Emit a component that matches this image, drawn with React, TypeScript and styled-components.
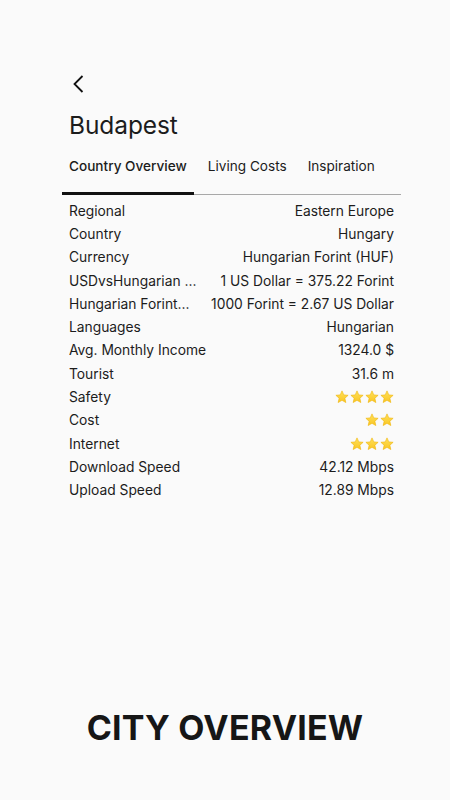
import React from "react"
import styled, { createGlobalStyle } from "styled-components"

const GlobalStyle = createGlobalStyle`
    html, body {
        margin: 0;
        padding: 0;
        background: #fafafa;
    }
    body {
        font-family: Inter, "Noto Sans", sans-serif;
        color: #1c1c1c;
    }
`

const Page = styled.div`
    width: 450px;
    height: 800px;
    display: flex;
    flex-direction: column;
    background: #fafafa;
    box-sizing: border-box;
    padding: 75px 49px 0 62px;
`

const BackButton = styled.button`
    display: flex;
    align-items: center;
    width: 24px;
    height: 18px;
    padding: 0 0 0 11px;
    border: none;
    background: transparent;
    cursor: pointer;
`

const Title = styled.h1`
    margin: 17px 0 0 7px;
    font-size: 24.5px;
    line-height: 30px;
    font-weight: 400;
    letter-spacing: -0.1px;
`

const TabBar = styled.div`
    display: flex;
    gap: 7px;
    margin-top: 5px;
    border-bottom: 1px solid #a8a8a8;
`

const Tab = styled.div<{ $active?: boolean }>`
    padding: 12px 7px 20px;
    font-size: 13.6px;
    line-height: 18px;
    color: #1c1c1c;
    font-weight: ${(p) => (p.$active ? 500 : 400)};
    box-shadow: ${(p) => (p.$active ? "inset 0 -3px 0 #111" : "none")};
    margin-bottom: -1px;
`

const List = styled.div`
    display: flex;
    flex-direction: column;
    padding: 4px 7px 0;
`

const Row = styled.div`
    display: flex;
    justify-content: space-between;
    align-items: center;
    gap: 20px;
    height: 23.3px;
    font-size: 13.8px;
`

const Label = styled.span`
    flex: 1 1 auto;
    min-width: 0;
    overflow: hidden;
    white-space: nowrap;
    text-overflow: ellipsis;
`

const Value = styled.span`
    flex: 0 0 auto;
    white-space: nowrap;
    display: flex;
    gap: 1px;
`

const Footer = styled.div`
    margin-top: auto;
    margin-bottom: 52px;
    margin-left: -13px;
    text-align: center;
    font-size: 34px;
    font-weight: 700;
    letter-spacing: 0.2px;
    color: #161616;
`

const Star: React.FC = () => (
    <svg width="14" height="14" viewBox="0 0 24 24">
        <defs>
            <linearGradient id="sg" x1="0" y1="0" x2="0" y2="1">
                <stop offset="0" stopColor="#ffe15a" />
                <stop offset="1" stopColor="#f9c523" />
            </linearGradient>
        </defs>
        <path
            d="M12 1.5l3.1 6.9 7.4.7-5.6 5 1.7 7.4L12 17.7l-6.6 3.8 1.7-7.4-5.6-5 7.4-.7z"
            fill="url(#sg)"
            stroke="#f0b400"
            strokeWidth="1"
            strokeLinejoin="round"
        />
    </svg>
)

const Stars: React.FC<{ count: number }> = ({ count }) => (
    <Value>
        {Array.from({ length: count }).map((_, i) => (
            <Star key={i} />
        ))}
    </Value>
)

const rows: { label: string; value?: string; stars?: number }[] = [
    { label: "Regional", value: "Eastern Europe" },
    { label: "Country", value: "Hungary" },
    { label: "Currency", value: "Hungarian Forint (HUF)" },
    { label: "USDvsHungarian Forint", value: "1 US Dollar = 375.22 Forint" },
    { label: "Hungarian Forint vs USD", value: "1000 Forint = 2.67 US Dollar" },
    { label: "Languages", value: "Hungarian" },
    { label: "Avg. Monthly Income", value: "1324.0 $" },
    { label: "Tourist", value: "31.6 m" },
    { label: "Safety", stars: 4 },
    { label: "Cost", stars: 2 },
    { label: "Internet", stars: 3 },
    { label: "Download Speed", value: "42.12 Mbps" },
    { label: "Upload Speed", value: "12.89 Mbps" },
]

const App: React.FC = () => {
    return (
        <Page>
            <GlobalStyle />
            <BackButton aria-label="back">
                <svg width="11" height="18" viewBox="0 0 11 18">
                    <path
                        d="M9.5 1L1.5 9l8 8"
                        fill="none"
                        stroke="#111"
                        strokeWidth="1.8"
                    />
                </svg>
            </BackButton>
            <Title>Budapest</Title>
            <TabBar>
                <Tab $active>Country Overview</Tab>
                <Tab>Living Costs</Tab>
                <Tab>Inspiration</Tab>
            </TabBar>
            <List>
                {rows.map((r) => (
                    <Row key={r.label}>
                        <Label>{r.label}</Label>
                        {r.stars ? <Stars count={r.stars} /> : <Value>{r.value}</Value>}
                    </Row>
                ))}
            </List>
            <Footer>CITY OVERVIEW</Footer>
        </Page>
    )
}

export default App
